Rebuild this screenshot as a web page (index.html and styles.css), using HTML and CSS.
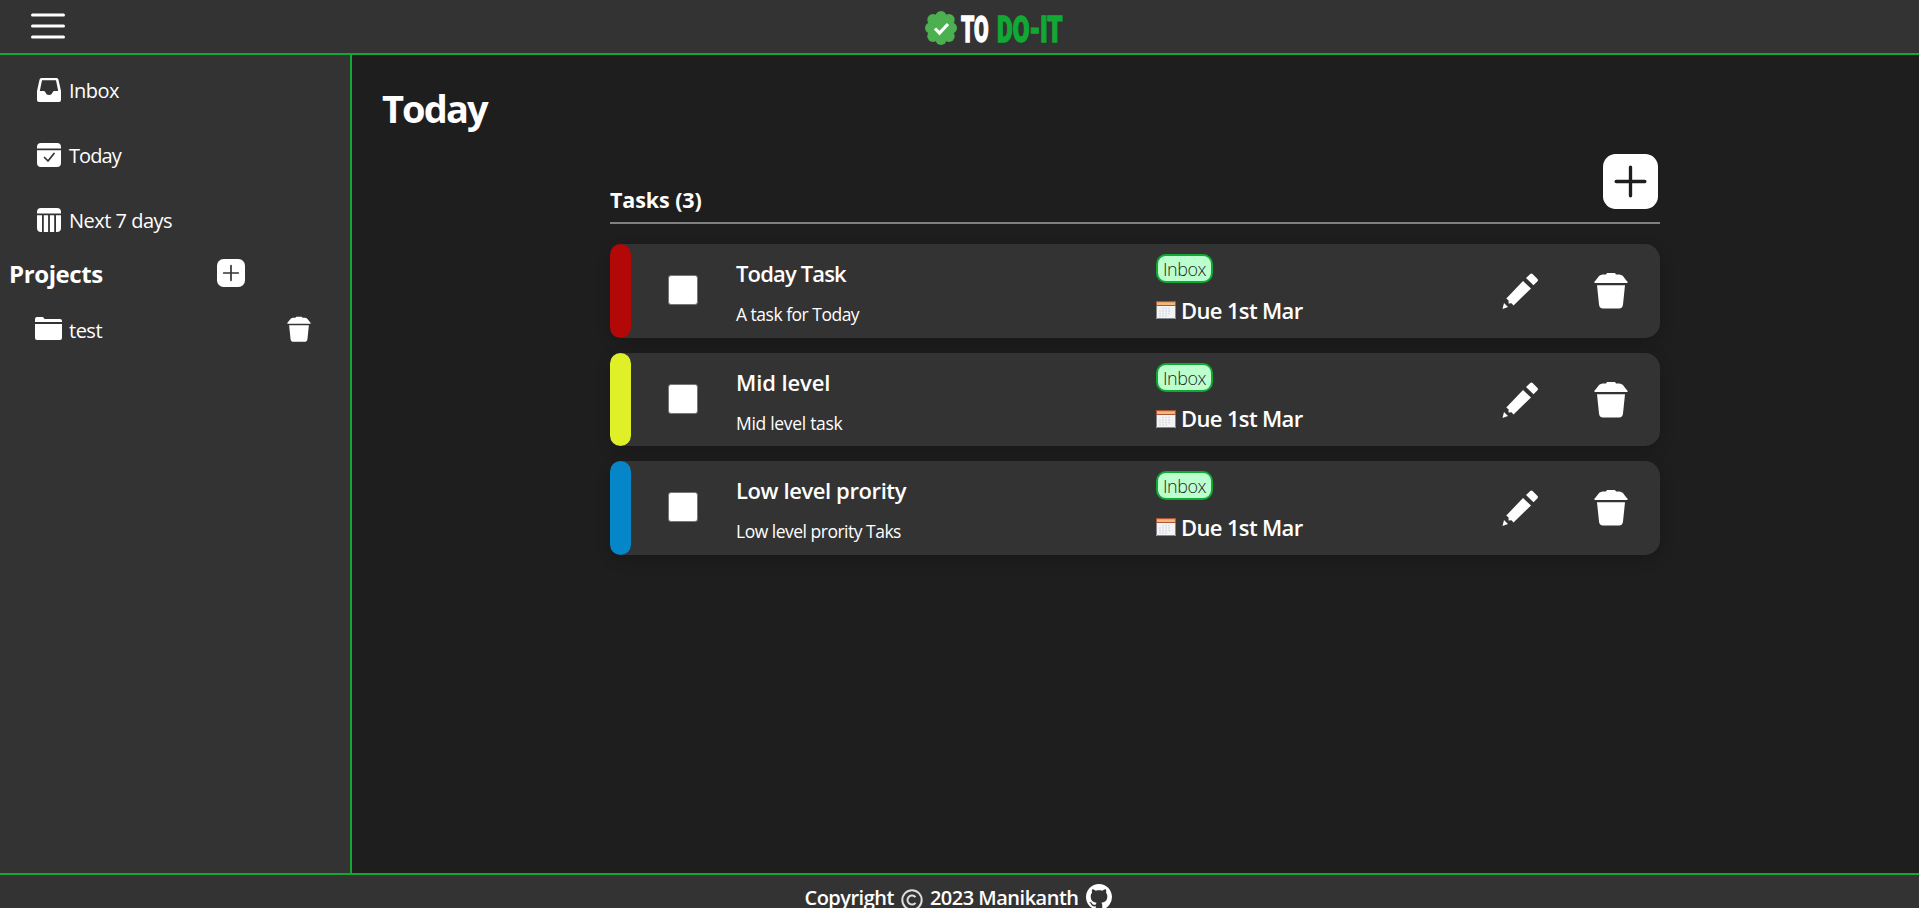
FILE: index.html
```html
<!DOCTYPE html>
<html lang="en">
<head>
<meta charset="utf-8">
<title>To Do-It</title>
<link rel="stylesheet" href="styles.css">
</head>
<body>
<svg class="defs" aria-hidden="true">
  <symbol id="trash" viewBox="0 0 34 36">
    <path d="M.5 10.500V9C3 7.500 4 2.500 8.500 2H12l1-1.500h8L22 2h3.500C30 2.500 31 7.500 33.500 9v1.500z"/>
    <path d="M3 12.800h28l-2 19.200q-.4 4-4 4H9q-3.600 0-4-4z"/>
  </symbol>
  <symbol id="pencil" viewBox="0 0 36 36">
    <path d="M28 1.200q1.400-1.400 2.800 0l4.500 4.500q1.400 1.400 0 2.800L31.500 12.300 24 5z"/>
    <path d="M21 8l8 7.500L11.500 32.500 9.500 30.300 6.500 30.500 6.600 27.500 4.300 25.500z"/>
    <path d="M2 30l4 4-5.500 2z"/>
  </symbol>
  <symbol id="plus" viewBox="0 0 28 28">
    <rect width="28" height="28" rx="6.500"/>
    <path class="cut" d="M14 6.700v14.600M6.700 14h14.600"/>
  </symbol>
  <symbol id="calendar" viewBox="0 0 20 18">
    <rect width="20" height="18" fill="#f4f4f6"/>
    <rect width="20" height="5" fill="#a9573a"/>
    <rect x="1" y="1.200" width="18" height="2.800" fill="#f3b877"/>
    <path d="M.5 5v12.500h19V5" fill="none" stroke="#85868b"/>
    <path d="M6 7.500h9M3 10h12M3 12.500h12M3 15h9" stroke="#dcdee4" stroke-width="1.500" stroke-dasharray="2 1" fill="none"/>
  </symbol>
</svg>

<header class="header">
  <svg class="menu" viewBox="0 0 34 26"><path d="M1.500 2h31M1.500 13h31M1.500 24h31"/></svg>
  <div class="brand">
    <svg class="badge" viewBox="-16 -17 32 34">
      <g fill="#4caf50"><circle r="13.500"/><circle cy="-11.300" r="5.700"/><circle cy="11.300" r="5.700"/><circle cx="-10.300" r="5.700"/><circle cx="10.300" r="5.700"/><circle cx="8" cy="-8.200" r="5.700"/><circle cx="-8" cy="-8.200" r="5.700"/><circle cx="8" cy="8.200" r="5.700"/><circle cx="-8" cy="8.200" r="5.700"/></g>
      <path d="M-6 .5l4.500 4.700L7-4" fill="none" stroke="#fff" stroke-width="3.200"/>
    </svg>
    <span class="word to">TO</span>
    <span class="word doit">DO-IT</span>
  </div>
</header>

<div class="main">
  <aside class="sidebar">
    <nav class="nav">
      <a class="nav-item"><svg class="nav-icon" viewBox="0 0 24 24"><path fill-rule="evenodd" d="M4.500 0h15q1.700 0 2 1.700L24 13v9q0 2-2 2H2q-2 0-2-2v-9L2.500 1.700Q2.800 0 4.500 0zM5 2.200L2.800 13H7q1 0 1.500 1.500 .8 2.500 3.500 2.500t3.500-2.500Q16 13 17 13h4.200L19 2.200z"/></svg><span class="t-inbox">Inbox</span></a>
      <a class="nav-item"><svg class="nav-icon" viewBox="0 0 24 24"><path d="M0 5.500V4q0-4 4-4h16q4 0 4 4v1.500zM0 7.300h24V20q0 4-4 4H4q-4 0-4-4z"/><path class="cut" d="M7.500 14.500l3.500 3.500 6-7.500"/></svg><span class="t-today">Today</span></a>
      <a class="nav-item"><svg class="nav-icon" viewBox="0 0 24 24"><path d="M0 5.500V4q0-4 4-4h16q4 0 4 4v1.500zM0 7.300h5V24H4q-4 0-4-4zM6.800 7.300h4.300V24H6.800zM12.900 7.300h4.300V24h-4.300zM19 7.300h5V20q0 4-4 4h-1z"/></svg><span class="t-next">Next 7 days</span></a>
    </nav>
    <div class="projects-head">
      <h2>Projects</h2>
      <svg class="add-project"><use href="#plus"/></svg>
    </div>
    <div class="project">
      <svg class="folder" viewBox="0 0 27 23"><path d="M0 5V2q0-2 2-2h5.500q1 0 2 2H25q2 0 2 2v1zM0 6.900h27V21q0 2-2 2H2q-2 0-2-2z"/></svg>
      <span class="t-test">test</span>
      <svg class="remove"><use href="#trash"/></svg>
    </div>
  </aside>

  <main class="content">
    <h1>Today</h1>
    <section class="tasks">
      <div class="tasks-head">
        <h3>Tasks (3)</h3>
        <svg class="add-task"><use href="#plus"/></svg>
      </div>
      <article class="task high">
        <span class="check"></span>
        <div class="info"><h4>Today Task</h4><p>A task for Today</p></div>
        <div class="meta"><span class="tag">Inbox</span><div class="due"><svg><use href="#calendar"/></svg><span>Due 1st Mar</span></div></div>
        <svg class="edit"><use href="#pencil"/></svg><svg class="delete"><use href="#trash"/></svg>
      </article>
      <article class="task mid">
        <span class="check"></span>
        <div class="info"><h4>Mid level</h4><p>Mid level task</p></div>
        <div class="meta"><span class="tag">Inbox</span><div class="due"><svg><use href="#calendar"/></svg><span>Due 1st Mar</span></div></div>
        <svg class="edit"><use href="#pencil"/></svg><svg class="delete"><use href="#trash"/></svg>
      </article>
      <article class="task low">
        <span class="check"></span>
        <div class="info"><h4>Low level prority</h4><p>Low level prority Taks</p></div>
        <div class="meta"><span class="tag">Inbox</span><div class="due"><svg><use href="#calendar"/></svg><span>Due 1st Mar</span></div></div>
        <svg class="edit"><use href="#pencil"/></svg><svg class="delete"><use href="#trash"/></svg>
      </article>
    </section>
  </main>
</div>

<footer class="footer">
  <span class="copy">Copyright</span>
  <svg class="copyright" viewBox="0 0 22 22"><circle cx="11" cy="11" r="9.700"/><path d="M14.500 8.200a4.500 4.500 0 1 0 0 5.600"/></svg>
  <span class="owner">2023 Manikanth</span>
  <svg class="github" viewBox="0 0 16 16"><path d="M8 0C3.580 0 0 3.580 0 8c0 3.540 2.290 6.530 5.470 7.590.4.070.55-.17.55-.38 0-.19-.01-.82-.01-1.490-2.010.37-2.530-.49-2.690-.94-.09-.23-.48-.94-.82-1.130-.28-.15-.68-.52-.01-.53.63-.01 1.080.58 1.230.82.72 1.210 1.870.87 2.330.66.07-.52.28-.87.51-1.070-1.780-.2-3.640-.89-3.640-3.950 0-.87.31-1.590.82-2.150-.08-.2-.36-1.020.08-2.120 0 0 .67-.21 2.200.82.64-.18 1.320-.27 2-.27s1.360.09 2 .27c1.530-1.040 2.200-.82 2.200-.82.44 1.100.16 1.920.08 2.120.51.56.82 1.270.82 2.150 0 3.070-1.870 3.750-3.650 3.950.29.25.54.73.54 1.480 0 1.070-.01 1.930-.01 2.200 0 .21.15.46.55.38A8.010 8.010 0 0 0 16 8c0-4.420-3.580-8-8-8z"/></svg>
</footer>
</body>
</html>
```
FILE: styles.css
```css
* { box-sizing: border-box; margin: 0; padding: 0; }
body {
  height: 100vh; overflow: hidden;
  display: flex; flex-direction: column;
  background: #1e1e1e; color: #fff;
  font-family: "Segoe UI", "Open Sans", "Noto Sans", sans-serif;
  font-size: 20px; line-height: 27px; letter-spacing: -.5px;
}
svg { display: block; fill: #fff; flex: none; }
span, h1, h2, h3, h4, p { white-space: nowrap; }
.defs { position: absolute; width: 0; height: 0; }
.cut { fill: none; stroke: var(--cut, #333); stroke-width: 1.7; stroke-linecap: round; stroke-linejoin: round; }

.header {
  height: 55px; flex: none;
  display: flex; justify-content: space-between;
  background: #333; border-bottom: 2px solid #11a833;
}
.menu { width: 34px; height: 26px; margin: 13px 0 0 31px; stroke: #fff; stroke-width: 3; stroke-linecap: round; }
.brand { display: flex; margin-right: 852px; }
.badge { width: 32px; height: 34px; margin: 11px 4px 0 0; }
.word { font: 900 37px/44px Roboto, sans-serif; letter-spacing: 0; margin-top: 8px; transform-origin: 0 0; -webkit-text-stroke: 1.4px currentColor; }
.to { width: 36px; transform: scaleX(.57); }
.doit { width: 70px; color: #11a833; transform: scaleX(.655); }

.main { flex: 1; display: flex; min-height: 0; }
.sidebar { width: 352px; flex: none; background: #333; border-right: 2px solid #11a833; }
.nav { display: flex; flex-direction: column; gap: 38px; padding: 22px 0 0 37px; }
.nav-item { display: flex; align-items: center; gap: 8px; height: 27px; }
.t-today { letter-spacing: -.9px; }
.nav-icon { width: 24px; height: 24px; margin-top: -2px; }
.projects-head { display: flex; align-items: center; justify-content: space-between; width: 245px; height: 32px; padding-left: 9px; margin-top: 23px; }
.projects-head h2 { font-size: 24px; line-height: 34px; padding-top: 1px; letter-spacing: -.4px; }
.add-project { width: 28px; height: 28px; }
.project { display: flex; align-items: center; gap: 7px; height: 27px; margin: 28px 39px 0 35px; }
.folder { width: 27px; height: 23px; margin-top: -4px; }
.remove { width: 24px; height: 26px; margin: -3px 0 0 auto; }

.content { flex: 1; padding: 26px 259px 0 30px; }
.content h1 { font-size: 38px; line-height: 54px; letter-spacing: -1.9px; margin-bottom: 1px; }
.tasks { display: flex; flex-direction: column; gap: 15px; margin-left: 228px; }
.tasks-head { display: flex; justify-content: space-between; height: 88px; padding-right: 2px; border-bottom: 2px solid #808080; margin-bottom: 5px; }
.tasks-head h3 { font-size: 21.500px; line-height: 30px; margin-top: 49px; letter-spacing: -.1px; }
.add-task { --cut: #1e1e1e; width: 55px; height: 55px; margin-top: 18px; }
.add-task { stroke-width: 2; }
.task {
  position: relative;
  display: grid; grid-template-columns: 68px 420px 346px 92px auto;
  height: 93.500px; padding-left: 58px;
  background: #333; border-radius: 15px;
  box-shadow: 0 5px 15px rgba(0, 0, 0, .2);
}
.task::before { content: ""; position: absolute; left: 0; top: 0; bottom: 0; width: 21px; border-radius: 10.500px; background: var(--level); }
.high { --level: #b30808; }
.mid { --level: #dfef28; }
.low { --level: #0586c9; }
.check { width: 30px; height: 30px; margin-top: 31px; background: #fff; border: 1px solid #767676; border-radius: 3px; }
.info h4 { font-size: 22px; font-weight: 600; line-height: 30px; margin-top: 14px; letter-spacing: -.4px; }
.info p { font-size: 17.500px; line-height: 24px; margin-top: 14px; }
.high h4 { letter-spacing: -.85px; }
.mid h4 { letter-spacing: -.1px; }
.mid p { letter-spacing: -.3px; }
.tag { display: block; width: 57px; height: 29px; margin-top: 10px; border: 2px solid #11a833; border-radius: 10px; background: #bbffcf; color: #1e1e1e; font-size: 18px; font-weight: 300; line-height: 27px; text-align: center; letter-spacing: -.5px; }
.due { display: flex; align-items: center; gap: 5px; height: 30px; margin-top: 12px; font-size: 22px; font-weight: 600; letter-spacing: -.65px; }
.due svg { width: 20px; height: 18px; }
.edit { width: 36px; height: 36px; margin-top: 29px; }
.delete { width: 34px; height: 37px; margin-top: 28px; }

.footer {
  height: 35px; flex: none;
  display: flex; justify-content: center; align-items: flex-start; gap: 7px;
  padding: 8px 3px 0 0;
  background: #333; border-top: 2px solid #11a833; font-weight: 600;
}
.copy, .owner { line-height: 25px; padding-top: 2px; }
.copyright { width: 22px; height: 22px; margin-top: 6px; fill: none; stroke: #ddd; stroke-width: 2; }
.github { width: 26px; height: 26px; margin-top: 1px; }
```
